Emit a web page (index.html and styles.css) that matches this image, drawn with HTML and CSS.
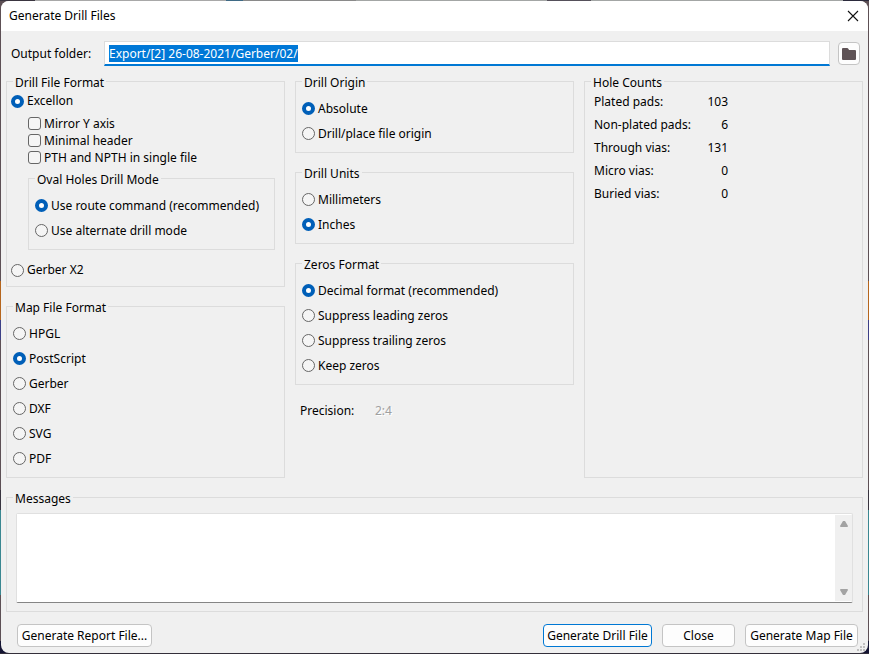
FILE: index.html
```html
<!DOCTYPE html>
<html lang="en">
  <head>
    <meta charset="UTF-8" />
    <meta name="viewport" content="width=device-width, initial-scale=1.0" />
    <title>Generate Drill Files</title>
    <link rel="stylesheet" href="styles.css">
  </head>
  <body>
    <form class="dialog">
      <header class="titlebar">
        <h1>Generate Drill Files</h1>
        <button type="button" class="close-x" aria-label="Close window">
          <svg width="12" height="12" viewBox="0 0 12 12">
            <path d="M1 1l10 10M11 1L1 11" fill="none" stroke="#111" stroke-width="1.1" />
          </svg>
        </button>
      </header>

      <div class="output-row">
        <label for="outputFolder">Output folder:</label>
        <input id="outputFolder" type="text" value="Export/[2] 26-08-2021/Gerber/02/" autofocus />
        <button type="button" class="browse" aria-label="Browse">
          <svg width="16" height="14" viewBox="0 0 16 14">
            <path d="M2 1h4q1 0 1.500 1l.5 1h6q1 0 1 1v8q0 1-1 1H2q-1 0-1-1V2q0-1 1-1z" fill="#5f5356" />
          </svg>
        </button>
      </div>

      <main class="columns">
        <div class="column">
          <fieldset class="format">
            <legend>Drill File Format</legend>
            <label class="row"><input type="radio" name="format" checked />Excellon</label>
            <div class="excellon">
              <label class="row"><input type="checkbox" />Mirror Y axis</label>
              <label class="row"><input type="checkbox" />Minimal header</label>
              <label class="row"><input type="checkbox" />PTH and NPTH in single file</label>
              <fieldset class="options">
                <legend>Oval Holes Drill Mode</legend>
                <label class="row"><input type="radio" name="oval" checked />Use route command (recommended)</label>
                <label class="row"><input type="radio" name="oval" />Use alternate drill mode</label>
              </fieldset>
            </div>
            <label class="row"><input type="radio" name="format" />Gerber X2</label>
          </fieldset>

          <fieldset class="options">
            <legend>Map File Format</legend>
            <label class="row"><input type="radio" name="map" />HPGL</label>
            <label class="row"><input type="radio" name="map" checked />PostScript</label>
            <label class="row"><input type="radio" name="map" />Gerber</label>
            <label class="row"><input type="radio" name="map" />DXF</label>
            <label class="row"><input type="radio" name="map" />SVG</label>
            <label class="row"><input type="radio" name="map" />PDF</label>
          </fieldset>
        </div>

        <div class="column">
          <fieldset class="options">
            <legend>Drill Origin</legend>
            <label class="row"><input type="radio" name="origin" checked />Absolute</label>
            <label class="row"><input type="radio" name="origin" />Drill/place file origin</label>
          </fieldset>
          <fieldset class="options">
            <legend>Drill Units</legend>
            <label class="row"><input type="radio" name="units" />Millimeters</label>
            <label class="row"><input type="radio" name="units" checked />Inches</label>
          </fieldset>
          <fieldset class="options">
            <legend>Zeros Format</legend>
            <label class="row"><input type="radio" name="zeros" checked />Decimal format (recommended)</label>
            <label class="row"><input type="radio" name="zeros" />Suppress leading zeros</label>
            <label class="row"><input type="radio" name="zeros" />Suppress trailing zeros</label>
            <label class="row"><input type="radio" name="zeros" />Keep zeros</label>
          </fieldset>
          <div class="precision">
            <span>Precision:</span>
            <span class="disabled">2:4</span>
          </div>
        </div>

        <fieldset class="counts">
          <legend>Hole Counts</legend>
          <table>
            <tr><th scope="row">Plated pads:</th><td>103</td></tr>
            <tr><th scope="row">Non-plated pads:</th><td>6</td></tr>
            <tr><th scope="row">Through vias:</th><td>131</td></tr>
            <tr><th scope="row">Micro vias:</th><td>0</td></tr>
            <tr><th scope="row">Buried vias:</th><td>0</td></tr>
          </table>
        </fieldset>
      </main>

      <fieldset class="messages">
        <legend>Messages</legend>
        <div class="log">
          <textarea aria-label="Messages" readonly></textarea>
          <div class="scrollbar">
            <svg width="10" height="8" viewBox="0 0 10 8"><path d="M4 1h2l3 5q0 1-1 1H2q-1 0-1-1z" fill="#a3a3a3" /></svg>
            <svg width="10" height="8" viewBox="0 0 10 8"><path d="M4 7h2l3-5q0-1-1-1H2q-1 0-1 1z" fill="#a3a3a3" /></svg>
          </div>
        </div>
      </fieldset>

      <footer class="actions">
        <button type="button" class="btn report">Generate Report File...</button>
        <button type="submit" class="btn default">Generate Drill File</button>
        <button type="button" class="btn close">Close</button>
        <button type="button" class="btn map">Generate Map File</button>
      </footer>
      <svg class="grip" width="8" height="8" viewBox="0 0 8 8">
        <path d="M6 0h2v2H6zM3 3h2v2H3zM6 3h2v2H6zM0 6h2v2H0zM3 6h2v2H3zM6 6h2v2H6z" fill="#bfbfbf" />
      </svg>
    </form>

    <script>
      document.getElementById("outputFolder").select();
    </script>
  </body>
</html>
```
FILE: styles.css
```css
* {
  margin: 0;
  padding: 0;
  box-sizing: border-box;
}
/* the desktop shows as a thin edge round the dialog */
body {
  display: flex;
  min-height: 100vh;
  padding: 1px;
  font-family: "Noto Sans", "Segoe UI", sans-serif;
  font-size: 12px;
  line-height: 18px;
  color: #000;
  background:
    linear-gradient(90deg, #3a3540 4%, #a8a8a8 4% 26%, #3f6a85 26% 28%, #8a8a8a 28% 41%, #a3a6a5 41% 63%, #55505a 63% 68%, #a3a6a5 68% 97%, #2b2a3c 97%) top / 100% 1px no-repeat,
    linear-gradient(#332f3a, #332f3a) bottom / 100% 1px no-repeat,
    linear-gradient(#5d5055 43%, #b5651d 43% 49%, #3c3f86 49% 52%, #5d5055 52% 75%, #38343f 75% 78%, #3a8791 78% 91%, #5d5055 91% 98%, #141433 98%);
}
input,
button,
textarea {
  font: inherit;
  color: inherit;
}

.dialog {
  position: relative;
  flex: 1;
  display: flex;
  flex-direction: column;
  background: #f0f0f0;
  border-radius: 8px;
  overflow: hidden;
}
.titlebar {
  display: flex;
  align-items: center;
  justify-content: space-between;
  height: 30px;
  padding: 0 9px 0 8px;
  background: #fff;
}
.titlebar h1 {
  font-size: 12px;
  font-weight: 400;
}
.close-x {
  display: flex;
  border: none;
  background: none;
}

/* ------------ Output folder ------------ */
.output-row {
  display: flex;
  align-items: center;
  padding: 10px 8px 6px 10px;
}
.output-row label {
  width: 93px;
}
.output-row input {
  flex: 1;
  min-width: 0;
  height: 25px;
  padding: 0 4px;
  border: 1px solid #dcdcdc;
  border-bottom: 2px solid #0078d4;
  background: #fff;
  outline: none;
}
.output-row input::selection {
  background: #0078d7;
  color: #fff;
}
.browse {
  display: flex;
  align-items: center;
  justify-content: center;
  width: 22px;
  height: 23px;
  margin-left: 8px;
  border: 1px solid #c4c4c4;
  border-radius: 4px;
  background: #fdfdfd;
}

/* ------------ Groups ------------ */
.columns {
  flex: 1;
  display: grid;
  grid-template-columns: repeat(3, minmax(0, 1fr));
  gap: 10px;
  padding: 0 5px;
}
.column {
  display: flex;
  flex-direction: column;
  gap: 10px;
}
fieldset {
  min-width: 0;
  border: 1px solid #dcdcdc;
}
legend {
  padding: 4px 2px 0;
  line-height: 14px;
}
.row {
  display: flex;
  align-items: center;
  gap: 3px;
  white-space: nowrap;
}
.options {
  padding: 6px;
}
.options .row {
  height: 25px;
}
.format {
  padding: 2px 9px 7px 4px;
}
.format > legend {
  margin-left: 2px;
}
.excellon {
  padding: 5px 0 11px 17px;
}
.excellon > .row {
  height: 17px;
}
.excellon .options {
  margin-top: 3px;
}
.precision {
  display: flex;
  padding: 7px 5px;
}
.precision span:first-child {
  width: 75px;
}
.disabled {
  color: #a0a0a0;
  text-shadow: 1px 1px #fff;
}

input[type="radio"],
input[type="checkbox"] {
  appearance: none;
  flex: none;
  width: 13px;
  height: 13px;
  border: 1px solid #666;
  background: #f5f5f5;
}
input[type="radio"] {
  border-radius: 50%;
}
input[type="checkbox"] {
  border-radius: 3px;
}
input[type="radio"]:checked {
  border: 4px solid #005fb8;
  background: #fff;
}

.counts {
  padding: 0 6px;
}
.counts table {
  width: 134px;
  margin-left: 3px;
  border-collapse: collapse;
}
.counts th {
  font-weight: 400;
  text-align: left;
  white-space: nowrap;
}
.counts td {
  text-align: right;
}
.counts tr {
  height: 23px;
}

/* ------------ Messages ------------ */
.messages {
  margin: 10px 5px 0;
  padding: 7px 6px 8px;
}
.log {
  display: flex;
  height: 90px;
  margin: 0 3px;
  border: 1px solid #e0e0e0;
  border-bottom-color: #858585;
  border-radius: 2px;
  background: #fff;
}
.log textarea {
  flex: 1;
  border: none;
  outline: none;
  resize: none;
  overflow: hidden;
}
.scrollbar {
  display: flex;
  flex-direction: column;
  align-items: center;
  justify-content: space-between;
  width: 17px;
  margin: 1px 0;
  padding: 5px 0;
  background: #f0f0f0;
}

.actions {
  display: flex;
  gap: 10px;
  padding: 12px 10px 6px 16px;
}
.btn {
  height: 23px;
  padding: 0 2px;
  border: 1px solid #c4c4c4;
  border-radius: 4px;
  background: #fdfdfd;
  white-space: nowrap;
}
.report {
  min-width: 135px;
  margin-right: auto;
}
.default {
  min-width: 109px;
  border-color: #0078d4;
}
.close {
  width: 73px;
}
.map {
  min-width: 113px;
}
.grip {
  position: absolute;
  right: 3px;
  bottom: 2px;
}
```
